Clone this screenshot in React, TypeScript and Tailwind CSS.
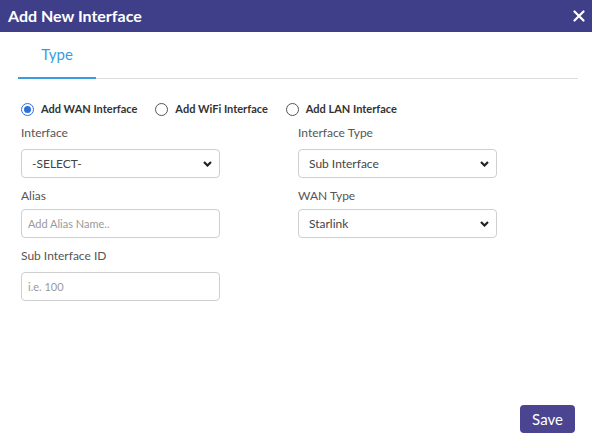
import React, { useState } from 'react';

const font = { fontFamily: 'Lato, "Open Sans", sans-serif' };

const Chevron = () => (
  <svg width="9" height="6" viewBox="0 0 9 6" className="pointer-events-none absolute right-[8px] top-1/2 -translate-y-1/2">
    <path d="M1 1l3.5 3.5L8 1" fill="none" stroke="#222" strokeWidth="2.2" />
  </svg>
);

const Select = ({ value, options }: { value: string; options: string[] }) => (
  <div className="relative w-[199px]">
    <select
      defaultValue={value}
      className="h-[29px] w-full appearance-none rounded-[4px] border border-[#cfcfcf] bg-white pl-[10px] text-[12px] text-[#444] outline-none"
    >
      {options.map((o) => (
        <option key={o}>{o}</option>
      ))}
    </select>
    <Chevron />
  </div>
);

const Input = ({ placeholder }: { placeholder: string }) => (
  <input
    placeholder={placeholder}
    className="h-[29px] w-[199px] rounded-[4px] border border-[#cfcfcf] bg-white px-[6px] text-[11px] text-[#444] outline-none placeholder:text-[#9a9a9a]"
  />
);

const Radio = ({ label, checked, onClick }: { label: string; checked: boolean; onClick: () => void }) => (
  <button type="button" onClick={onClick} className="flex items-center gap-[7px]">
    {checked ? (
      <span className="flex h-[13px] w-[13px] items-center justify-center rounded-full border-[1.5px] border-[#2f6fd8]">
        <span className="h-[7px] w-[7px] rounded-full bg-[#2f6fd8]" />
      </span>
    ) : (
      <span className="h-[13px] w-[13px] rounded-full border border-[#555]" />
    )}
    <span className="text-[11px] font-bold text-[#333]">{label}</span>
  </button>
);

export default function App() {
  const [kind, setKind] = useState('wan');

  return (
    <div style={font} className="flex h-[438px] w-[592px] flex-col bg-white">
      <div className="flex h-8 items-center justify-between bg-[#3e3e89] pl-2 pr-[7px]">
        <span className="text-[16px] font-bold text-white">Add New Interface</span>
        <svg width="12" height="12" viewBox="0 0 12 12">
          <path d="M1.5 1.5l9 9M10.5 1.5l-9 9" stroke="#fff" strokeWidth="2.2" strokeLinecap="round" />
        </svg>
      </div>

      <div className="flex flex-1 flex-col px-[14px]">
        <div className="ml-1 flex border-b border-[#dcdcdc]">
          <div className="-mb-px flex h-[47px] w-[78px] items-center justify-center border-b-2 border-[#3a9be0] text-[15px] text-[#3a9be0]">
            Type
          </div>
        </div>

        <div className="ml-[7px] mt-[22px] flex h-4 gap-[18px]">
          <Radio label="Add WAN Interface" checked={kind === 'wan'} onClick={() => setKind('wan')} />
          <Radio label="Add WiFi Interface" checked={kind === 'wifi'} onClick={() => setKind('wifi')} />
          <Radio label="Add LAN Interface" checked={kind === 'lan'} onClick={() => setKind('lan')} />
        </div>

        <div className="ml-[7px] mt-2 grid grid-cols-[277px_1fr] text-[12px] leading-4 text-[#555]">
          <div className="flex flex-col">
            <label className="mb-2">Interface</label>
            <Select value="-SELECT-" options={['-SELECT-', 'eth0', 'eth1']} />
            <label className="mb-[5px] mt-[10px]">Alias</label>
            <Input placeholder="Add Alias Name.." />
            <label className="mb-[8px] mt-[10px]">Sub Interface ID</label>
            <Input placeholder="i.e. 100" />
          </div>
          <div className="flex flex-col">
            <label className="mb-2">Interface Type</label>
            <Select value="Sub Interface" options={['Sub Interface', 'Physical']} />
            <label className="mb-[5px] mt-[10px]">WAN Type</label>
            <Select value="Starlink" options={['Starlink', 'Broadband', 'LTE']} />
          </div>
        </div>

        <div className="mt-auto mb-[5px] flex justify-end pr-[3px]">
          <button className="h-[28px] w-[55px] rounded-[4px] bg-[#4b4591] text-[15px] text-white">Save</button>
        </div>
      </div>
    </div>
  );
}
